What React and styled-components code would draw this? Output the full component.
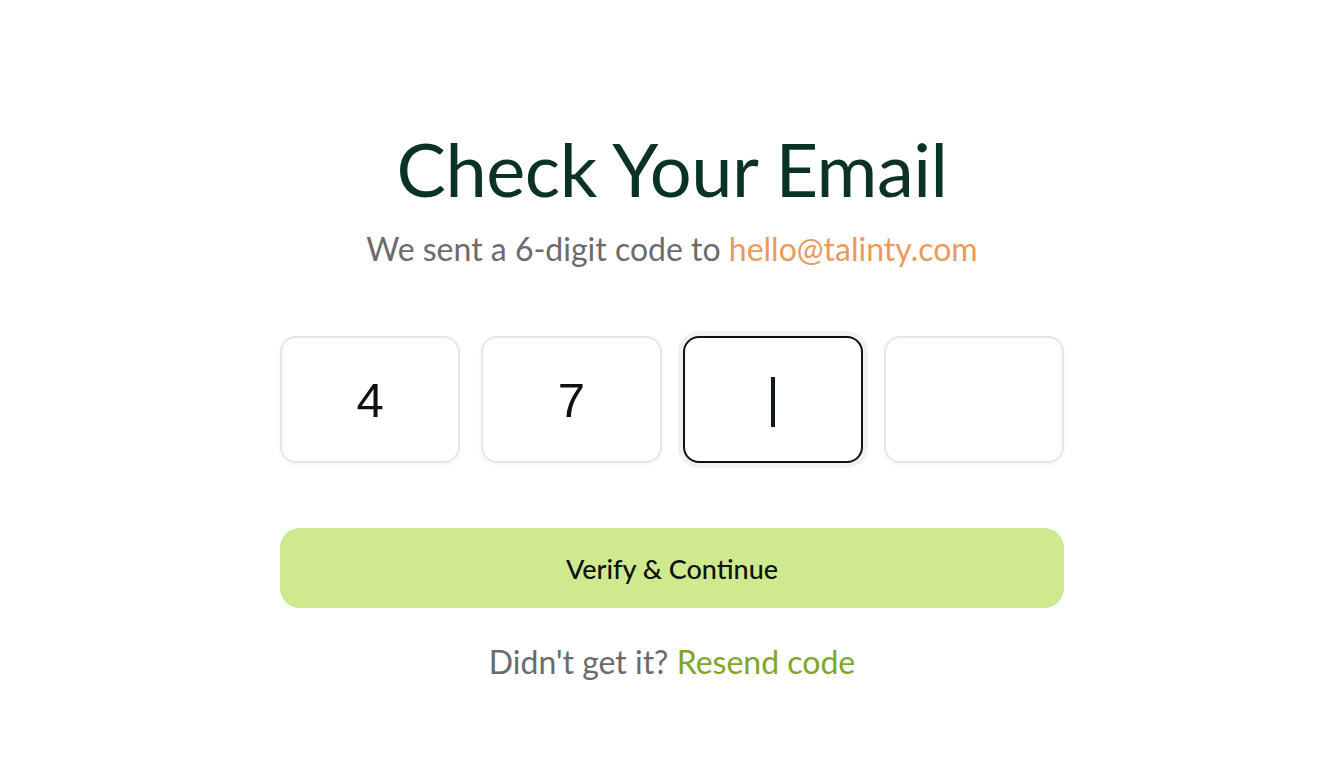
import React from "react";
import styled, { createGlobalStyle } from "styled-components";

const Global = createGlobalStyle`
  html, body { margin: 0; padding: 0; background: #ffffff; }
  body { font-family: "Lato", "Noto Sans", sans-serif; }
  * { box-sizing: border-box; }
`;

const Page = styled.main`
  width: 100%;
  height: 778px;
  display: flex;
  justify-content: center;
  padding-top: 125px;
  padding-left: 26px;
`;

const Card = styled.section`
  width: 784px;
  display: flex;
  flex-direction: column;
  align-items: center;
`;

const Title = styled.h1`
  margin: 0;
  font-family: "Lato", sans-serif;
  font-weight: 400;
  font-size: 74px;
  line-height: 88px;
  color: #0a3326;
  letter-spacing: -0.5px;
`;

const Subtitle = styled.p`
  margin: 16px 0 0;
  font-size: 32px;
  line-height: 40px;
  color: #6b6b6b;
  font-weight: 400;
`;

const Accent = styled.span`
  color: ${(p) => p.$color};
  cursor: ${(p) => (p.$link ? "pointer" : "auto")};
`;

const CodeRow = styled.div`
  margin-top: 67px;
  width: 100%;
  display: grid;
  grid-template-columns: repeat(4, 1fr);
  gap: 21px;
`;

const CodeBox = styled.div`
  height: 127px;
  border-radius: 16px;
  border: ${(p) => (p.$active ? "2px solid #111111" : "2px solid #e6e6e6")};
  box-shadow: ${(p) =>
    p.$active ? "0 0 0 5px #f1f1f1" : "0 2px 4px rgba(0, 0, 0, 0.04)"};
  background: #ffffff;
  display: flex;
  align-items: center;
  justify-content: center;
  font-family: "Liberation Sans", Arial, sans-serif;
  font-size: 49px;
  color: #111111;
`;

const Caret = styled.span`
  display: block;
  width: 4px;
  height: 50px;
  background: #0d1a17;
  margin-top: 4px;
`;

const Button = styled.button`
  margin-top: 65px;
  width: 100%;
  height: 80px;
  border: none;
  border-radius: 20px;
  background: #cfe98f;
  color: #111111;
  font-family: "Lato", sans-serif;
  font-size: 27px;
  font-weight: 500;
  cursor: pointer;
`;

const Footer = styled.p`
  margin: 34px 0 0;
  font-size: 32px;
  line-height: 40px;
  color: #6b6b6b;
`;

const digits = ["4", "7", "", ""];

export default function App() {
  return (
    <>
      <Global />
      <Page>
        <Card>
          <Title>Check Your Email</Title>
          <Subtitle>
            We sent a 6-digit code to <Accent $color="#ea9a5c">hello@talinty.com</Accent>
          </Subtitle>
          <CodeRow>
            {digits.map((d, i) => (
              <CodeBox key={i} $active={i === 2}>
                {i === 2 ? <Caret /> : d}
              </CodeBox>
            ))}
          </CodeRow>
          <Button>Verify &amp; Continue</Button>
          <Footer>
            Didn't get it? <Accent $color="#7ea628" $link>Resend code</Accent>
          </Footer>
        </Card>
      </Page>
    </>
  );
}
